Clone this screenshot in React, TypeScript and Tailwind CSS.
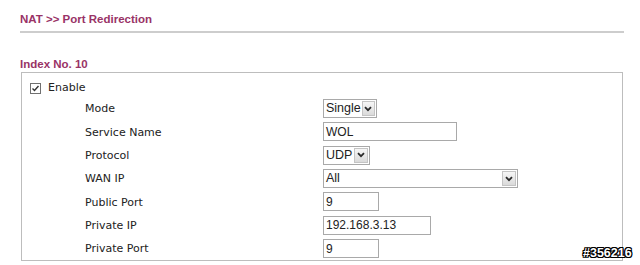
import React from 'react';

const labelFont = { fontFamily: '"DejaVu Sans", Verdana, sans-serif' };
const arial = { fontFamily: '"Liberation Sans", Arial, sans-serif' };

const Chevron: React.FC = () => (
  <svg width="8" height="6" viewBox="0 0 8 6">
    <path d="M1 1.2 L4 4.2 L7 1.2" fill="none" stroke="#2a2a2a" strokeWidth="1.8" />
  </svg>
);

const Select: React.FC<{ value: string; width: string }> = ({ value, width }) => (
  <div className={`flex h-[19px] items-stretch border border-[#a9a9a9] bg-white ${width}`}>
    <span className="flex flex-1 items-center pl-[2px] text-[12.5px] text-[#222]" style={arial}>
      {value}
    </span>
    <span className="m-[1px] flex w-[14px] items-center justify-center border border-[#c4c4c4] bg-gradient-to-b from-[#f6f6f6] to-[#dadada]">
      <Chevron />
    </span>
  </div>
);

const Input: React.FC<{ value: string; width: string }> = ({ value, width }) => (
  <div
    className={`flex h-[19px] items-center border border-[#a9a9a9] bg-white pl-[2px] text-[12px] text-[#222] ${width}`}
    style={arial}
  >
    {value}
  </div>
);

const rows: { label: string; field: React.ReactNode }[] = [
  { label: 'Mode', field: <Select value="Single" width="w-[54px]" /> },
  { label: 'Service Name', field: <Input value="WOL" width="w-[134px]" /> },
  { label: 'Protocol', field: <Select value="UDP" width="w-[47px]" /> },
  { label: 'WAN IP', field: <Select value="All" width="w-[195px]" /> },
  { label: 'Public Port', field: <Input value="9" width="w-[56px]" /> },
  { label: 'Private IP', field: <Input value="192.168.3.13" width="w-[108px]" /> },
  { label: 'Private Port', field: <Input value="9" width="w-[56px]" /> },
];

export default function App() {
  return (
    <div className="relative h-[265px] w-[640px] overflow-hidden bg-white">
      <div className="flex w-[624px] flex-col pl-[20px]">
        <div className="pt-[12px] text-[11.5px] font-bold leading-[14px] text-[#993366]" style={arial}>
          NAT &gt;&gt; Port Redirection
        </div>
        <div className="mt-[5px] border-b-2 border-[#cdcdcd]" />
        <div className="mt-[24px] text-[11.5px] font-bold leading-[14px] text-[#993366]" style={arial}>
          Index No. 10
        </div>
        <div className="mx-[1px] mt-[1px] flex flex-col border border-[#bdbdbd]">
          <div className="flex h-[24px] items-center pl-[8px] pt-[6px]">
            <svg width="11" height="11" viewBox="0 0 11 11" className="shrink-0">
              <rect x="0.5" y="0.5" width="10" height="10" fill="#fff" stroke="#707070" />
              <path d="M2.5 5.5 L4.5 7.5 L8.5 3" fill="none" stroke="#333" strokeWidth="1.4" />
            </svg>
            <span className="ml-[7px] text-[11px] text-[#222]" style={labelFont}>
              Enable
            </span>
          </div>
          {rows.map((r) => (
            <div key={r.label} className="flex h-[23.33px] items-center">
              <span className="w-[301px] shrink-0 pl-[63px] pt-[2px] text-[11px] text-[#222]" style={labelFont}>
                {r.label}
              </span>
              {r.field}
            </div>
          ))}
        </div>
      </div>
      <div
        className="absolute left-[583px] top-[246px] text-[12.5px] font-bold leading-[14px] text-white [text-shadow:-1px_-1px_0_#000,1px_-1px_0_#000,-1px_1px_0_#000,1px_1px_0_#000,0_1px_0_#000,0_-1px_0_#000,1px_0_0_#000,-1px_0_0_#000]"
        style={arial}
      >
        #356216
      </div>
    </div>
  );
}
